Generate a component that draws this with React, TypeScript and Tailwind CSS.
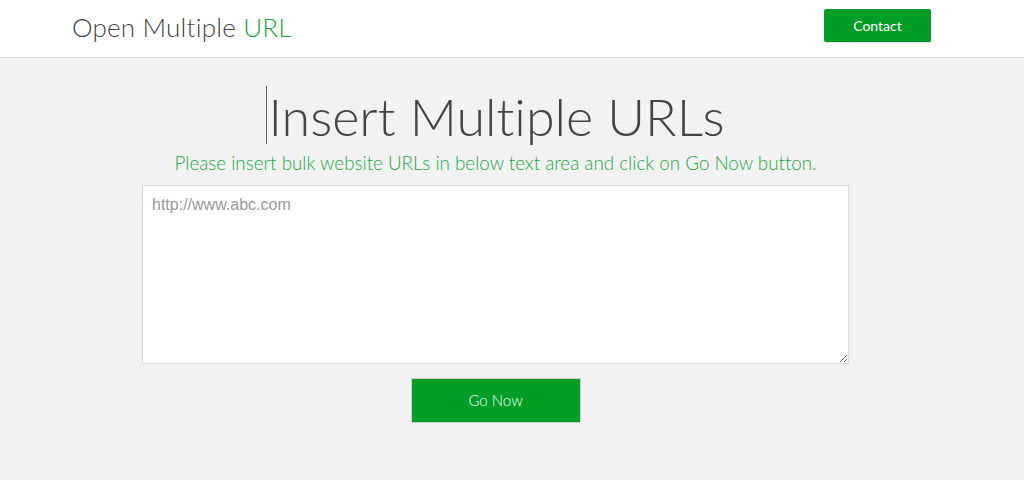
export default function App() {
  return (
    <div className="min-h-[480px] bg-[#f2f2f2] font-['Lato',_'Open_Sans',_sans-serif] [font-variant-ligatures:none]">
      {/* top bar */}
      <header className="h-[58px] bg-white border-b border-[#dedede]">
        <div className="flex items-center justify-between pl-[72px] pr-[93px] h-full">
          <a href="#" className="text-[26px] font-light text-[#444] tracking-[0.2px] -mt-[2px]">
            Open Multiple <span className="text-[#1aa33a]">URL</span>
          </a>
          <button className="w-[107px] h-[33px] -mt-[6px] bg-[#009e27] text-white text-[14px] rounded-[2px] shadow-[0_1px_1px_rgba(0,0,0,0.15)]">
            Contact
          </button>
        </div>
      </header>

      {/* url form */}
      <main className="w-[991px] flex flex-col items-center pt-[28px]">
        <div className="flex items-start">
          <span className="w-px h-[58px] bg-[#666] mr-[1px]" />
          <h1 className="text-[52px] leading-[60px] font-light text-[#444]">
            Insert Multiple URLs
          </h1>
        </div>
        <p className="mt-[3px] text-[18.8px] font-light text-[#22a83e]">
          Please insert bulk website URLs in below text area and click on Go Now button.
        </p>
        <textarea
          placeholder="http://www.abc.com"
          className="mt-[8px] w-[707px] h-[179px] bg-white border border-[#d9d9d9] px-[9px] py-[7px] text-[16px] font-['Liberation_Sans',_Arial,_sans-serif] text-[#555] placeholder:text-[#999] outline-none"
        />
        <button className="mt-[14px] w-[170px] h-[45px] bg-[#009e27] text-white text-[15px] font-light border border-[#cfcfcf]">
          Go Now
        </button>
      </main>
    </div>
  );
}
